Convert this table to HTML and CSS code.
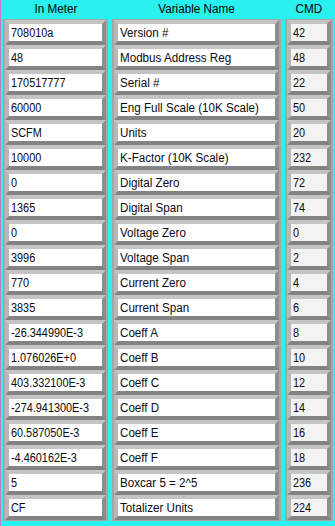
FILE: index.html
```html
<!DOCTYPE html>
<html>
<head>
<meta charset="utf-8">
<title>Meter Registers</title>
<link rel="stylesheet" href="styles.css">
</head>
<body>
<div class="sheet">
  <div class="heads">
    <div class="head"><span>In Meter</span></div>
    <div class="head"><span>Variable Name</span></div>
    <div class="head"><span>CMD</span></div>
  </div>
  <div class="cols">
    <div class="col">
      <div class="cell"><div class="val"><span>708010a</span></div></div>
      <div class="cell"><div class="val"><span>48</span></div></div>
      <div class="cell"><div class="val"><span>170517777</span></div></div>
      <div class="cell"><div class="val"><span>60000</span></div></div>
      <div class="cell"><div class="val"><span>SCFM</span></div></div>
      <div class="cell"><div class="val"><span>10000</span></div></div>
      <div class="cell"><div class="val"><span>0</span></div></div>
      <div class="cell"><div class="val"><span>1365</span></div></div>
      <div class="cell"><div class="val"><span>0</span></div></div>
      <div class="cell"><div class="val"><span>3996</span></div></div>
      <div class="cell"><div class="val"><span>770</span></div></div>
      <div class="cell"><div class="val"><span>3835</span></div></div>
      <div class="cell"><div class="val"><span>-26.344990E-3</span></div></div>
      <div class="cell"><div class="val"><span>1.076026E+0</span></div></div>
      <div class="cell"><div class="val"><span>403.332100E-3</span></div></div>
      <div class="cell"><div class="val"><span>-274.941300E-3</span></div></div>
      <div class="cell"><div class="val"><span>60.587050E-3</span></div></div>
      <div class="cell"><div class="val"><span>-4.460162E-3</span></div></div>
      <div class="cell"><div class="val"><span>5</span></div></div>
      <div class="cell"><div class="val"><span>CF</span></div></div>
    </div>
    <div class="col names">
      <div class="cell"><div class="val"><span>Version #</span></div></div>
      <div class="cell"><div class="val"><span>Modbus Address Reg</span></div></div>
      <div class="cell"><div class="val"><span>Serial #</span></div></div>
      <div class="cell"><div class="val"><span>Eng Full Scale (10K Scale)</span></div></div>
      <div class="cell"><div class="val"><span>Units</span></div></div>
      <div class="cell"><div class="val"><span>K-Factor (10K Scale)</span></div></div>
      <div class="cell"><div class="val"><span>Digital Zero</span></div></div>
      <div class="cell"><div class="val"><span>Digital Span</span></div></div>
      <div class="cell"><div class="val"><span>Voltage Zero</span></div></div>
      <div class="cell"><div class="val"><span>Voltage Span</span></div></div>
      <div class="cell"><div class="val"><span>Current Zero</span></div></div>
      <div class="cell"><div class="val"><span>Current Span</span></div></div>
      <div class="cell"><div class="val"><span>Coeff A</span></div></div>
      <div class="cell"><div class="val"><span>Coeff B</span></div></div>
      <div class="cell"><div class="val"><span>Coeff C</span></div></div>
      <div class="cell"><div class="val"><span>Coeff D</span></div></div>
      <div class="cell"><div class="val"><span>Coeff E</span></div></div>
      <div class="cell"><div class="val"><span>Coeff F</span></div></div>
      <div class="cell"><div class="val"><span>Boxcar 5 = 2^5</span></div></div>
      <div class="cell"><div class="val"><span>Totalizer Units</span></div></div>
    </div>
    <div class="col cmd">
      <div class="cell"><div class="val"><span>42</span></div></div>
      <div class="cell"><div class="val"><span>48</span></div></div>
      <div class="cell"><div class="val"><span>22</span></div></div>
      <div class="cell"><div class="val"><span>50</span></div></div>
      <div class="cell"><div class="val"><span>20</span></div></div>
      <div class="cell"><div class="val"><span>232</span></div></div>
      <div class="cell"><div class="val"><span>72</span></div></div>
      <div class="cell"><div class="val"><span>74</span></div></div>
      <div class="cell"><div class="val"><span>0</span></div></div>
      <div class="cell"><div class="val"><span>2</span></div></div>
      <div class="cell"><div class="val"><span>4</span></div></div>
      <div class="cell"><div class="val"><span>6</span></div></div>
      <div class="cell"><div class="val"><span>8</span></div></div>
      <div class="cell"><div class="val"><span>10</span></div></div>
      <div class="cell"><div class="val"><span>12</span></div></div>
      <div class="cell"><div class="val"><span>14</span></div></div>
      <div class="cell"><div class="val"><span>16</span></div></div>
      <div class="cell"><div class="val"><span>18</span></div></div>
      <div class="cell"><div class="val"><span>236</span></div></div>
      <div class="cell"><div class="val"><span>224</span></div></div>
    </div>
  </div>
</div>
</body>
</html>
```
FILE: styles.css
```css
html, body
{
margin: 0;
padding: 0;
background: #2af0f0;
}

body
{
font-family: "Liberation Sans", Arial, sans-serif;
color: #000;
}

.sheet
{
height: 526px;
border-left: 1px solid #c47ad0;
padding-left: 2px;
box-sizing: border-box;
}

/* column titles and the three arrays share one grid */
.heads, .cols
{
display: grid;
grid-template-columns: 105px 169px 48px;
column-gap: 4px;
}

.head
{
height: 19px;
line-height: 18px;
font-size: 13px;
text-align: center;
}

/* panel font is a narrow sans, so the glyphs get squeezed a little */
.head span
{
display: inline-block;
transform: scaleX(0.9);
}

.col
{
background: #a6a6a6;
padding: 1px 2px;
}

.cell
{
border-style: solid;
border-width: 4px;
border-color: #c4c4c4 #8e8e8e #838383 #b8b8b8;
}

.val
{
height: 17px;
box-sizing: border-box;
padding: 1px 0 0 2px;
line-height: 17px;
font-size: 12.5px;
background: #fff;
color: #0a0a14;
white-space: nowrap;
overflow: hidden;
}

.val span
{
display: inline-block;
transform: scaleX(0.87);
transform-origin: left center;
}

.names .val span
{
transform: scaleX(0.93);
}

.cmd .val
{
background: #f3f3f3;
}
```
